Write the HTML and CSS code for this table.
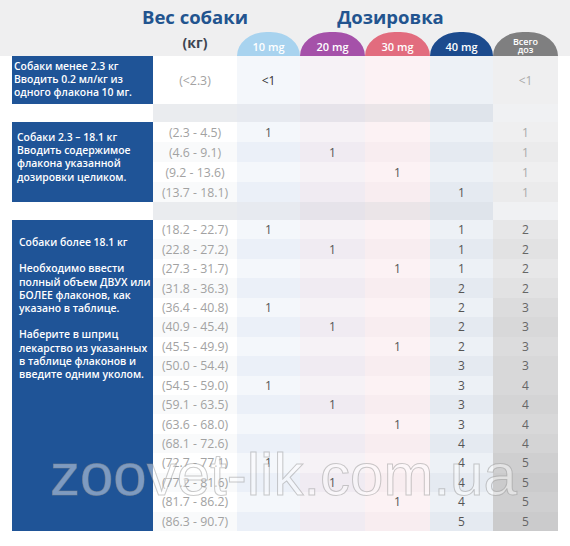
FILE: index.html
```html
<!DOCTYPE html>
<html lang="ru">

<head>
  <meta charset="UTF-8" />
  <meta name="viewport" content="width=device-width, initial-scale=1.0" />
  <title>Дозировка</title>
  <link rel="stylesheet" href="styles.css">
</head>

<body>
  <div class="head">
    <div class="head-top">
      <div class="spacer"></div>
      <div class="title weight-title">Вес собаки</div>
      <div class="title dose-title">Дозировка</div>
    </div>
    <div class="head-bottom">
      <div class="spacer"></div>
      <div class="unit">(кг)</div>
      <div class="pill p10">10 mg</div>
      <div class="pill p20">20 mg</div>
      <div class="pill p30">30 mg</div>
      <div class="pill p40">40 mg</div>
      <div class="pill ptotal">Всего<br>доз</div>
    </div>
  </div>

  <div class="section s1">
    <div class="label">Собаки менее 2.3 кг<br>Вводить 0.2 мл/кг из<br>одного флакона 10 мг.</div>
    <div class="rows">
      <div class="row"><span>(&lt;2.3)</span><span class="dark">&lt;1</span><span></span><span></span><span></span><span>&lt;1</span></div>
    </div>
  </div>

  <div class="gap"><span></span><span></span><span></span><span></span><span></span><span></span></div>

  <div class="section s2">
    <div class="label">Собаки 2.3 – 18.1 кг<br>Вводить содержимое<br>флакона указанной<br>дозировки целиком.</div>
    <div class="rows">
      <div class="row"><span>(2.3 - 4.5)</span><span>1</span><span></span><span></span><span></span><span>1</span></div>
      <div class="row"><span>(4.6 - 9.1)</span><span></span><span>1</span><span></span><span></span><span>1</span></div>
      <div class="row"><span>(9.2 - 13.6)</span><span></span><span></span><span>1</span><span></span><span>1</span></div>
      <div class="row"><span>(13.7 - 18.1)</span><span></span><span></span><span></span><span>1</span><span>1</span></div>
    </div>
  </div>

  <div class="gap"><span></span><span></span><span></span><span></span><span></span><span></span></div>

  <div class="section s3">
    <div class="label">
      <p>Собаки более 18.1 кг</p>
      <p>Необходимо ввести<br>полный объем ДВУХ или<br>БОЛЕЕ флаконов, как<br>указано в таблице.</p>
      <p>Наберите в шприц<br>лекарство из указанных<br>в таблице флаконов и<br>введите одним уколом.</p>
    </div>
    <div class="rows">
      <div class="row t2"><span>(18.2 - 22.7)</span><span>1</span><span></span><span></span><span>1</span><span>2</span></div>
      <div class="row t2"><span>(22.8 - 27.2)</span><span></span><span>1</span><span></span><span>1</span><span>2</span></div>
      <div class="row t2"><span>(27.3 - 31.7)</span><span></span><span></span><span>1</span><span>1</span><span>2</span></div>
      <div class="row t2"><span>(31.8 - 36.3)</span><span></span><span></span><span></span><span>2</span><span>2</span></div>
      <div class="row t3"><span>(36.4 - 40.8)</span><span>1</span><span></span><span></span><span>2</span><span>3</span></div>
      <div class="row t3"><span>(40.9 - 45.4)</span><span></span><span>1</span><span></span><span>2</span><span>3</span></div>
      <div class="row t3"><span>(45.5 - 49.9)</span><span></span><span></span><span>1</span><span>2</span><span>3</span></div>
      <div class="row t3"><span>(50.0 - 54.4)</span><span></span><span></span><span></span><span>3</span><span>3</span></div>
      <div class="row t4"><span>(54.5 - 59.0)</span><span>1</span><span></span><span></span><span>3</span><span>4</span></div>
      <div class="row t4"><span>(59.1 - 63.5)</span><span></span><span>1</span><span></span><span>3</span><span>4</span></div>
      <div class="row t4"><span>(63.6 - 68.0)</span><span></span><span></span><span>1</span><span>3</span><span>4</span></div>
      <div class="row t4"><span>(68.1 - 72.6)</span><span></span><span></span><span></span><span>4</span><span>4</span></div>
      <div class="row t5"><span>(72.7 - 77.1)</span><span>1</span><span></span><span></span><span>4</span><span>5</span></div>
      <div class="row t5"><span>(77.2 - 81.6)</span><span></span><span>1</span><span></span><span>4</span><span>5</span></div>
      <div class="row t5"><span>(81.7 - 86.2)</span><span></span><span></span><span>1</span><span>4</span><span>5</span></div>
      <div class="row t5"><span>(86.3 - 90.7)</span><span></span><span></span><span></span><span>5</span><span>5</span></div>
    </div>
  </div>

  <div class="watermark">zoovet-lik.com.ua</div>
</body>

</html>
```

FILE: styles.css
```css
body {
  margin: 0;
  background: #fff;
  font-family: "Open Sans", "DejaVu Sans", sans-serif;
  position: relative;
  height: 546px;
  overflow: hidden;
}

.head {
  background: #efeff0;
  padding-left: 12px;
  height: 56px;
}

.head-top {
  display: flex;
  height: 32px;
}

.spacer {
  width: 141px;
  flex: none;
}

.title {
  display: flex;
  justify-content: center;
  white-space: nowrap;
  color: #22548f;
  font-weight: 700;
  font-size: 18.5px;
  line-height: 24px;
  padding-top: 5px;
}

.weight-title {
  width: 84px;
}

.dose-title {
  width: 307px;
  padding-right: 14px;
}

.head-bottom {
  display: flex;
  height: 24px;
}

.unit {
  width: 84px;
  text-align: center;
  font-weight: 700;
  font-size: 14px;
  color: #3d4551;
  line-height: 16px;
  padding-top: 3px;
}

.pill {
  width: 65px;
  height: 24px;
  border-radius: 32px 32px 0 0 / 26px 26px 0 0;
  color: #fff;
  text-align: center;
  font-weight: 600;
  font-size: 11px;
  line-height: 14px;
  padding-top: 8px;
  box-sizing: border-box;
}

.p10 { background: #a8d3ef; width: 63px; }
.p20 { background: #a551a9; }
.p30 { background: #e26c7e; }
.p40 { background: #1c4b8e; width: 63px; }

.ptotal {
  background: #7f7f80;
  font-size: 9px;
  line-height: 8px;
  padding-top: 6px;
}

.section {
  display: flex;
  padding-left: 12px;
}

.label {
  width: 141px;
  flex: none;
  box-sizing: border-box;
  background: #1f5497;
  color: #fff;
  font-weight: 600;
  font-size: 10.4px;
  line-height: 13.2px;
  white-space: nowrap;
}

.label p {
  margin: 0 0 13.2px;
}

.s1 .label {
  height: 48px;
  padding: 4px 0 0 2px;
}

.s2 .label {
  height: 80px;
  padding: 9px 0 0 5px;
}

.s3 .label {
  height: 311px;
  padding: 16px 0 0 7px;
}

.rows {
  display: grid;
  grid-auto-rows: 1fr;
}

.row,
.gap {
  display: grid;
  grid-template-columns: 84px 63px 65px 65px 63px 65px;
}

.row span {
  display: flex;
  align-items: center;
  justify-content: center;
  font-size: 12px;
  color: #555;
}

.row span:nth-child(1) { background: #fff; color: #a2a2a2; font-size: 12.3px; }
.row span:nth-child(2) { background: #f4f7fb; }
.row span:nth-child(3) { background: #f6f2f6; }
.row span:nth-child(4) { background: #fcf2f4; }
.row span:nth-child(5) { background: #edf1f6; }
.row span:nth-child(6) { background: #efeff0; color: #aaa; }

.row:nth-child(even) span:nth-child(1) { background: #f9fafb; }
.row:nth-child(even) span:nth-child(2) { background: #ebf0f8; }
.row:nth-child(even) span:nth-child(3) { background: #f0ebf2; }
.row:nth-child(even) span:nth-child(4) { background: #f8edf0; }
.row:nth-child(even) span:nth-child(5) { background: #e5eaf1; }
.row:nth-child(even) span:nth-child(6) { background: #ebebec; }

.row span.dark { color: #333; }

.row.t2 span:nth-child(6) { background: #e7e7e8; color: #666; }
.row.t3 span:nth-child(6) { background: #dcdcdd; color: #666; }
.row.t4 span:nth-child(6) { background: #d8d8d9; color: #666; }
.row.t5 span:nth-child(6) { background: #cfcfd0; color: #666; }
.row.t2:nth-child(even) span:nth-child(6) { background: #e2e2e3; }
.row.t3:nth-child(even) span:nth-child(6) { background: #d8d8d9; }
.row.t4:nth-child(even) span:nth-child(6) { background: #d4d4d5; }
.row.t5:nth-child(even) span:nth-child(6) { background: #cbcbcc; }

.s1 .rows {
  height: 48px;
}

.s2 .rows {
  height: 80px;
}

.s3 .rows {
  height: 311px;
}

.gap {
  height: 18px;
  margin-left: 153px;
}

.gap span:nth-child(1) { background: #eaecef; }
.gap span:nth-child(2) { background: #e7eaf0; }
.gap span:nth-child(3) { background: #e6e3ea; }
.gap span:nth-child(4) { background: #ebe5e8; }
.gap span:nth-child(5) { background: #dfe4eb; }
.gap span:nth-child(6) { background: #f0f1f3; }

.watermark {
  position: absolute;
  left: 50px;
  top: 445px;
  font-family: "Liberation Sans", Arial, sans-serif;
  font-size: 60px;
  line-height: 59px;
  color: rgba(255, 255, 255, 0.42);
  -webkit-text-stroke: 1px rgba(140, 140, 140, 0.45);
  white-space: nowrap;
}
```
